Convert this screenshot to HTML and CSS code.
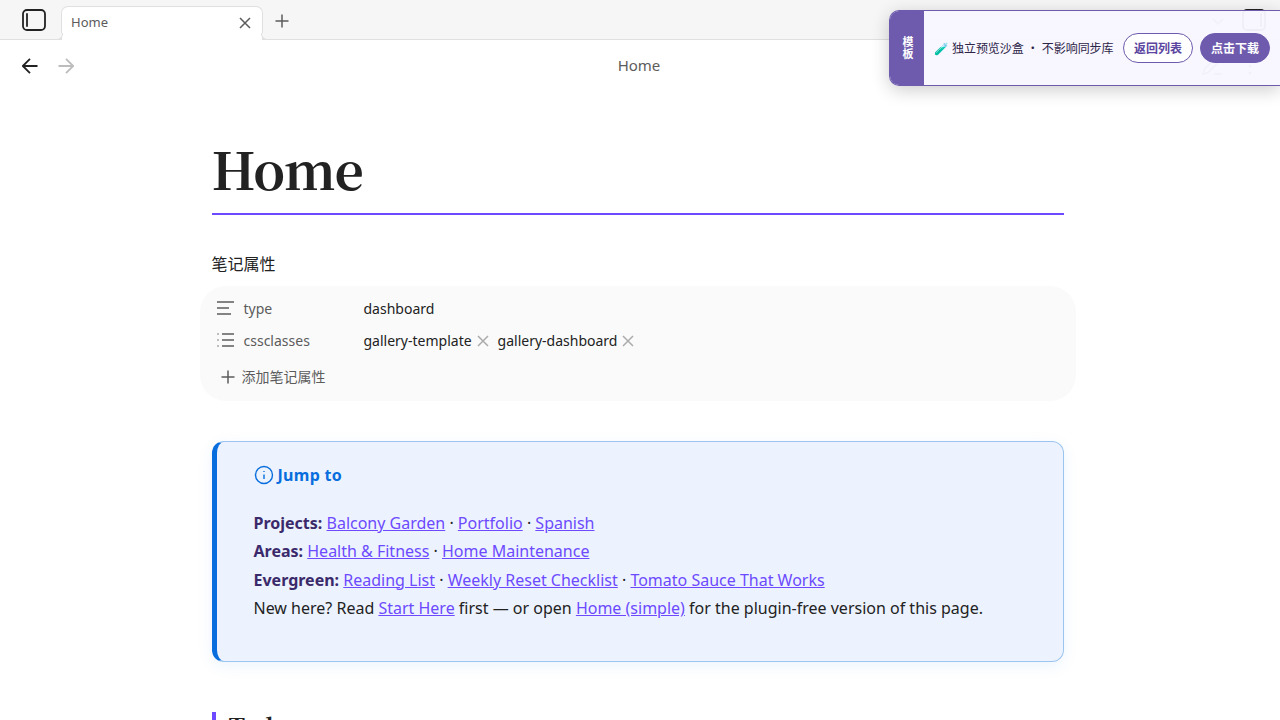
FILE: index.html
```html
<!DOCTYPE html>
<html lang="zh-CN">
<head>
    <meta charset="UTF-8">
    <meta name="viewport" content="width=device-width, initial-scale=1.0">
    <title>Home</title>
    <link rel="stylesheet" href="styles.css">
</head>
<body>
    <div class="tabbar">
        <svg class="sidebar-icon" viewBox="0 0 24 22"><rect x="1" y="1" width="22" height="20" rx="4"/><path d="M5 5v12"/></svg>
        <div class="tab">
            <span>Home</span>
            <svg class="close" viewBox="0 0 12 12"><path d="M1 1l10 10M11 1L1 11"/></svg>
        </div>
        <svg class="new-tab" viewBox="0 0 14 14"><path d="M7 .5v13M.5 7h13"/></svg>
        <div class="tabbar-right">
            <svg class="chevron" viewBox="0 0 12 8"><path d="M1 1l5 5 5-5"/></svg>
            <svg class="sidebar-icon" viewBox="0 0 24 22"><rect x="1" y="1" width="22" height="20" rx="4"/><path d="M19 5v12"/></svg>
        </div>
    </div>

    <div class="view-header">
        <svg class="arrow" viewBox="0 0 16 16"><path d="M15.5 8H1M8 .8L.8 8 8 15.2"/></svg>
        <svg class="arrow disabled" viewBox="0 0 16 16"><path d="M.5 8H15M8 .8L15.2 8 8 15.2"/></svg>
        <div class="view-title">Home</div>
        <div class="view-actions">
            <svg class="pencil" viewBox="0 0 21 18"><path d="M1 17l1.500-5L13 1.500q2-1.500 3.500 0t0 3.500L6 15.500zM12 17h8"/></svg>
            <svg class="more" viewBox="0 0 4 18"><circle cx="2" cy="2" r="1.500"/><circle cx="2" cy="9" r="1.500"/><circle cx="2" cy="16" r="1.500"/></svg>
        </div>
    </div>

    <div class="note">
        <h1>Home</h1>

        <div class="props-title">笔记属性</div>
        <div class="props">
            <div class="prop">
                <svg class="prop-icon" viewBox="0 0 18 14"><path d="M0 1h17M0 7h12M0 13h14"/></svg>
                <span class="key">type</span>
                <span class="value">dashboard</span>
            </div>
            <div class="prop">
                <svg class="prop-icon" viewBox="0 0 18 14"><path d="M5 1h12M5 7h12M5 13h12M.5 1h1M.5 7h1M.5 13h1"/></svg>
                <span class="key">cssclasses</span>
                <span class="value pill">gallery-template <svg viewBox="0 0 12 12"><path d="M1 1l10 10M11 1L1 11"/></svg></span>
                <span class="value pill">gallery-dashboard <svg viewBox="0 0 12 12"><path d="M1 1l10 10M11 1L1 11"/></svg></span>
            </div>
            <div class="add-prop">
                <svg viewBox="0 0 14 14"><path d="M7 .5v13M.5 7h13"/></svg>
                <span>添加笔记属性</span>
            </div>
        </div>

        <div class="callout">
            <div class="callout-title">
                <svg viewBox="0 0 20 20"><circle cx="10" cy="10" r="8.500"/><path d="M10 9.500v4.500M10 6v1"/></svg>
                <span>Jump to</span>
            </div>
            <p>
                <strong>Projects:</strong> <a href="#">Balcony Garden</a> · <a href="#">Portfolio</a> · <a href="#">Spanish</a><br>
                <strong>Areas:</strong> <a href="#">Health &amp; Fitness</a> · <a href="#">Home Maintenance</a><br>
                <strong>Evergreen:</strong> <a href="#">Reading List</a> · <a href="#">Weekly Reset Checklist</a> · <a href="#">Tomato Sauce That Works</a><br>
                New here? Read <a href="#">Start Here</a> first — or open <a href="#">Home (simple)</a> for the plugin-free version of this page.
            </p>
        </div>

        <h2>Today</h2>
    </div>

    <div class="banner">
        <div class="banner-tag">模板</div>
        <div class="banner-body">
            <span class="banner-text">🧪 独立预览沙盒 ・ 不影响同步库</span>
            <button class="btn">返回列表</button>
            <button class="btn primary">点击下载</button>
        </div>
    </div>
</body>
</html>
```
FILE: styles.css
```css
* {
    box-sizing: border-box;
}
body {
    margin: 0;
    height: 720px;
    overflow: hidden;
    background: #fff;
    color: #222;
    font-family: "Noto Sans", "Noto Sans CJK SC", sans-serif;
    font-size: 16px;
}
svg {
    fill: none;
    stroke: #5c5c5c;
    stroke-width: 1.5;
    flex: none;
    display: block;
}

/* tabs */
.tabbar {
    height: 40px;
    display: flex;
    align-items: flex-end;
    padding-left: 22px;
    background: #f6f6f6;
    border-bottom: 1px solid #e0e0e0;
}
.sidebar-icon {
    width: 24px;
    height: 22px;
    margin-bottom: 8px;
    stroke: #222;
    stroke-width: 1.8;
    stroke-linecap: round;
}
.tab {
    position: relative;
    width: 202px;
    height: 34px;
    margin: 0 0 -1px 15px;
    padding: 0 11px 3px 9px;
    display: flex;
    align-items: center;
    justify-content: space-between;
    background: #fff;
    border: 1px solid #e0e0e0;
    border-bottom: 0;
    border-radius: 7px 7px 0 0;
    font-size: 13px;
    color: #5c5c5c;
}
/* flared feet of the active tab */
.tab::before,
.tab::after {
    content: "";
    position: absolute;
    bottom: 0;
    width: 6px;
    height: 6px;
    border: 1px solid #e0e0e0;
    border-top: 0;
    background: #f6f6f6;
}
.tab::before {
    left: -6px;
    border-left: 0;
    border-radius: 0 0 6px 0;
}
.tab::after {
    right: -6px;
    border-right: 0;
    border-radius: 0 0 0 6px;
}
.close {
    width: 12px;
    height: 12px;
    margin-top: 2px;
}
.new-tab {
    width: 14px;
    height: 14px;
    margin: 0 0 11px 12px;
}
.tabbar-right {
    margin-left: auto;
    padding-right: 14px;
    display: flex;
    gap: 18px;
}
.chevron {
    width: 12px;
    height: 8px;
    margin-top: 9px;
}

/* header of the note */
.view-header {
    height: 52px;
    display: flex;
    align-items: center;
    padding: 0 28px 0 22px;
}
.arrow {
    width: 16px;
    height: 16px;
    margin-right: 20px;
    stroke: #222;
    stroke-width: 1.8;
}
.disabled {
    stroke: #bdbdbd;
}
.view-title {
    flex: 1;
    padding: 0 18px 2px 0;
    text-align: center;
    font-size: 15px;
    color: #5c5c5c;
}
.view-actions {
    display: flex;
    gap: 25px;
}
.pencil {
    width: 21px;
    height: 18px;
}
.more {
    width: 4px;
    height: 18px;
    fill: #5c5c5c;
    stroke: none;
}

.note {
    width: 852px;
    margin-left: 211.5px;
}
h1 {
    height: 123px;
    margin: 0;
    padding-top: 36px;
    border-bottom: 2px solid #6d4aff;
    font-family: "Noto Serif CJK SC", "Source Serif 4", "Noto Serif", "Liberation Serif", serif;
    font-size: 51.2px;
    font-weight: 700;
    line-height: 80px;
    letter-spacing: -0.02em;
}

/* properties */
.props-title {
    margin-top: 37px;
    line-height: 24px;
}
.props {
    height: 115px;
    margin: 10px -12px 0;
    padding: 6px 17px;
    border-radius: 26px;
    background: #fafafa;
    font-size: 14px;
}
.prop {
    height: 32px;
    display: flex;
    align-items: center;
}
.prop-icon {
    width: 18px;
    height: 14px;
    margin-right: 9px;
}
.key {
    width: 120px;
    color: #5c5c5c;
}
.pill {
    display: flex;
    align-items: center;
    gap: 5px;
    margin-right: 9px;
}
.pill svg {
    width: 12px;
    height: 12px;
    margin-top: 1px;
    stroke: #ababab;
}
.add-prop {
    display: flex;
    align-items: center;
    gap: 7px;
    height: 28px;
    margin: 6px 0 0 4px;
    color: #5c5c5c;
}
.add-prop svg {
    width: 14px;
    height: 14px;
    margin-top: 1px;
}

/* callout */
.callout {
    height: 221px;
    margin-top: 40px;
    padding: 19px 24px 0 37px;
    background: #ecf3fe;
    border: 1px solid #9cc4f0;
    border-left: 5px solid #086ddd;
    border-radius: 12px;
    box-shadow: 0 4px 16px rgba(8, 109, 221, 0.08);
}
.callout-title {
    display: flex;
    align-items: center;
    gap: 4px;
    height: 27px;
    color: #086ddd;
    font-weight: 700;
    letter-spacing: 0.3px;
}
.callout-title svg {
    width: 20px;
    height: 20px;
    stroke: #086ddd;
    stroke-width: 1.4;
}
.callout p {
    margin: 21px 0 0;
    line-height: 28.4px;
}
strong {
    color: #3b2a6b;
}
a {
    color: #6d4aff;
}
h2 {
    margin: 50px 0 0;
    padding-left: 13px;
    border-left: 4px solid #6d4aff;
    font-family: "Noto Serif CJK SC", "Source Serif 4", "Noto Serif", "Liberation Serif", serif;
    font-size: 24px;
    font-weight: 700;
    line-height: 27px;
    letter-spacing: -0.01em;
}

/* preview banner, floats over the page */
.banner {
    position: absolute;
    top: 10px;
    right: 0;
    width: 391px;
    height: 76px;
    display: flex;
    border: 1px solid #6e5bae;
    border-right: 0;
    border-radius: 10px 0 0 10px;
    background: rgba(248, 246, 255, 0.96);
    box-shadow: 0 4px 18px rgba(0, 0, 0, 0.2);
    overflow: hidden;
}
.banner-tag {
    width: 34px;
    padding-right: 10px;
    text-align: center;
    writing-mode: vertical-rl;
    line-height: 14px;
    background: #6e5bae;
    color: #fff;
    font-size: 11px;
    font-weight: 700;
    letter-spacing: 1px;
}
.banner-body {
    flex: 1;
    display: flex;
    align-items: center;
    padding: 0 10px;
}
.banner-text {
    flex: 1;
    font-size: 12px;
    letter-spacing: -0.05px;
    color: #2d2548;
    white-space: nowrap;
}
.btn {
    width: 70px;
    height: 30px;
    padding: 0;
    border: 1px solid #6e5bae;
    border-radius: 15px;
    background: #fff;
    color: #5b45a0;
    font-family: inherit;
    font-size: 12px;
    font-weight: 700;
}
.primary {
    margin-left: 7px;
    background: #6e5bae;
    color: #fff;
}
```
